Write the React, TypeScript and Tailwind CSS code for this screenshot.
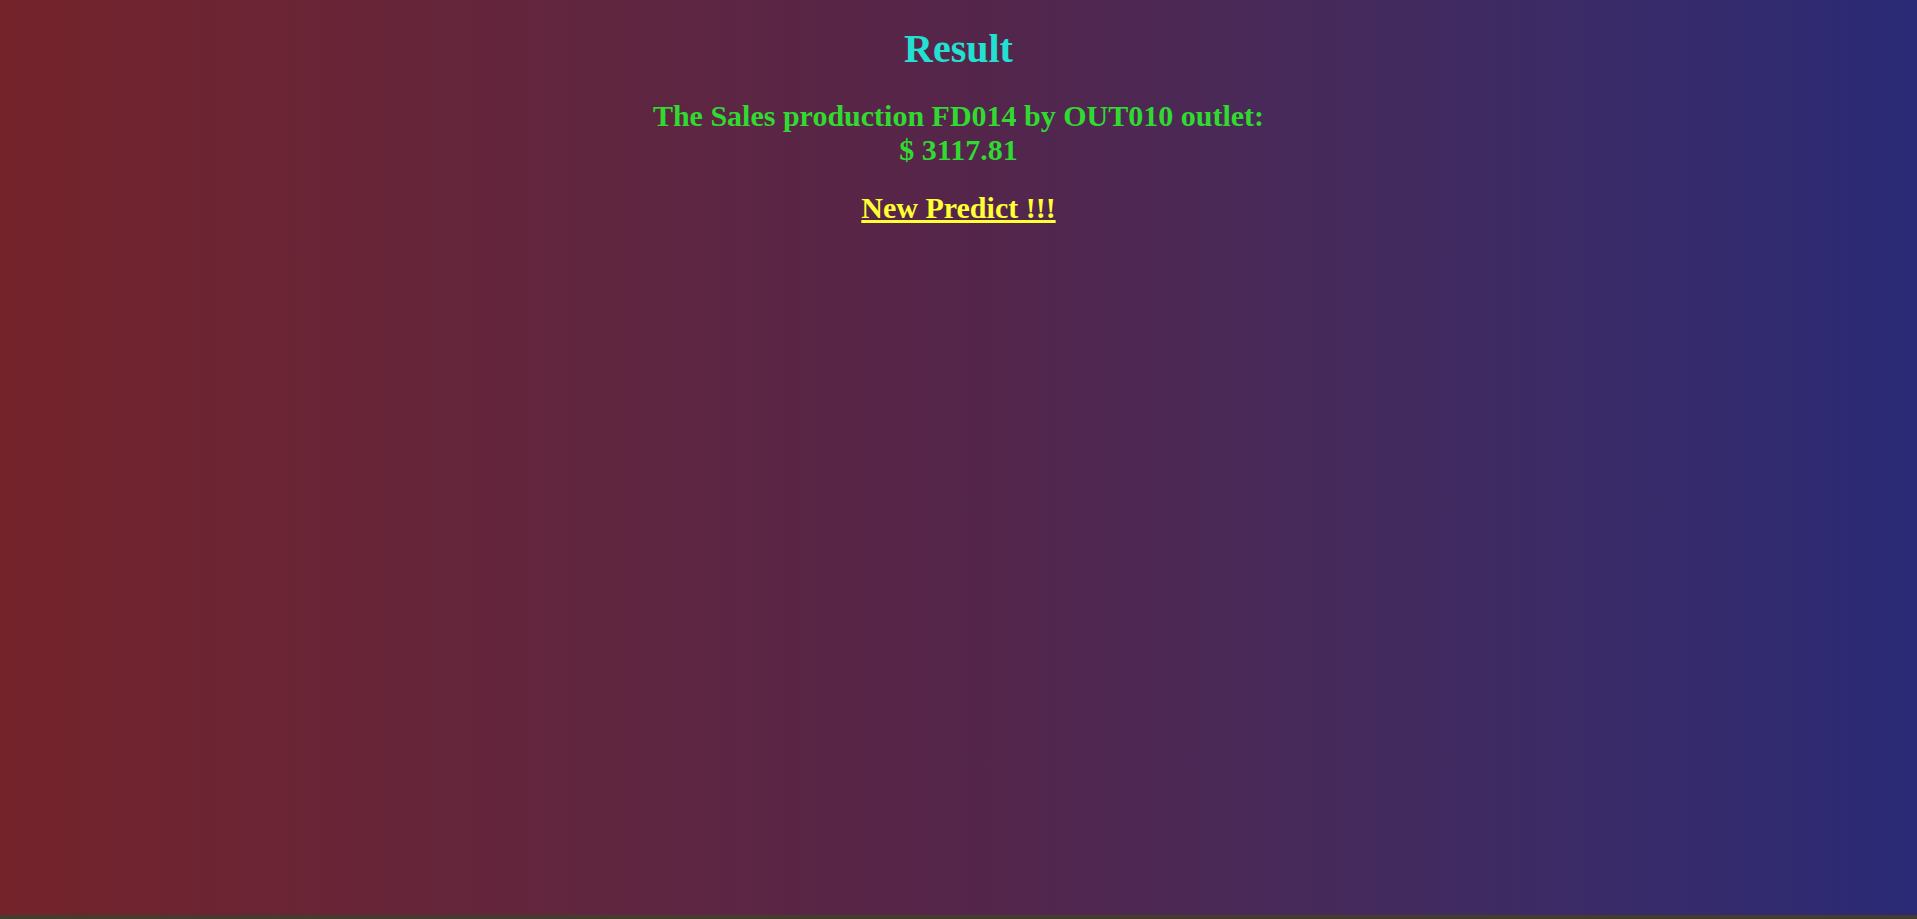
export default function App() {
  return (
    <div className="flex h-[919px] w-full flex-col font-['Liberation_Serif',serif]">
      <div className="flex h-[915px] w-full flex-col items-center bg-gradient-to-r from-[#74232a] via-[#55254a] to-[#2a2a76] text-center">
        <h1 className="mt-[28px] text-[40px] font-bold leading-[42px] text-[#22e0d2]">Result</h1>
        <h2 className="mt-[29px] text-[30px] font-bold leading-[34px] text-[#30da30]">
          The Sales production FD014 by OUT010 outlet:
          <br />$ 3117.81
        </h2>
        <a href="#" className="mt-[25px] text-[30px] font-bold leading-[32px] text-[#ffff33] underline">
          New Predict !!!
        </a>
      </div>
      <div className="h-[4px] w-full bg-[#443c2c]" />
    </div>
  );
}
